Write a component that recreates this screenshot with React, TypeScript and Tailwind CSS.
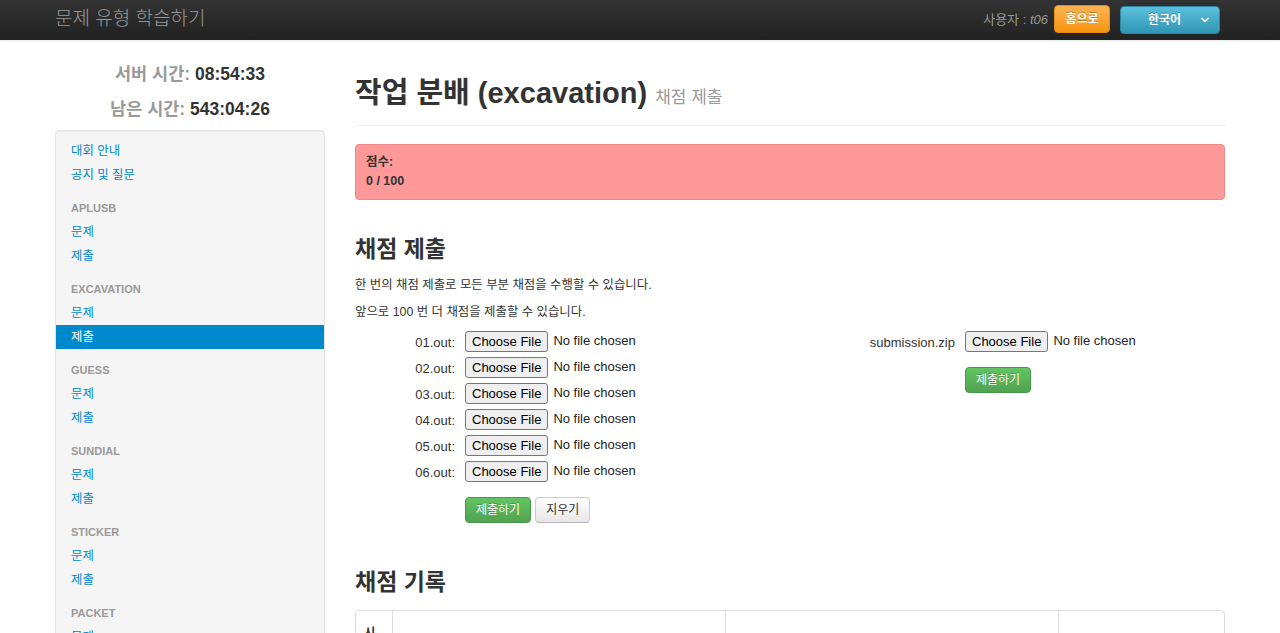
import React from "react";
import { ChevronDown } from "lucide-react";

type NavItem = { kind: "link" | "header"; label: string; active?: boolean };

const navItems: NavItem[] = [
  { kind: "link", label: "대회 안내" },
  { kind: "link", label: "공지 및 질문" },
  { kind: "header", label: "aplusb" },
  { kind: "link", label: "문제" },
  { kind: "link", label: "제출" },
  { kind: "header", label: "excavation" },
  { kind: "link", label: "문제" },
  { kind: "link", label: "제출", active: true },
  { kind: "header", label: "guess" },
  { kind: "link", label: "문제" },
  { kind: "link", label: "제출" },
  { kind: "header", label: "sundial" },
  { kind: "link", label: "문제" },
  { kind: "link", label: "제출" },
  { kind: "header", label: "sticker" },
  { kind: "link", label: "문제" },
  { kind: "link", label: "제출" },
  { kind: "header", label: "packet" },
  { kind: "link", label: "문제" },
  { kind: "link", label: "제출" },
];

const outputs = ["01.out", "02.out", "03.out", "04.out", "05.out", "06.out"];

function FilePicker() {
  return (
    <div className="flex items-center">
      <span className="h-[21px] px-[6px] border border-[#767676] bg-[#efefef] rounded-[3px] text-[13px] leading-[19px] text-black">
        Choose File
      </span>
      <span className="ml-[5px] text-[13px] text-[#222]">No file chosen</span>
    </div>
  );
}

function GreenButton() {
  return (
    <button className="h-[26px] px-[10px] rounded-[4px] border border-[#459845] bg-gradient-to-b from-[#62c462] to-[#51a351] text-white text-[12px] leading-[24px] [text-shadow:0_-1px_0_rgba(0,0,0,0.25)]">
      제출하기
    </button>
  );
}

export default function App() {
  return (
    <div className="min-h-[633px] bg-white text-[#333] font-['Liberation_Sans','Noto_Sans_CJK_KR',sans-serif] text-[13px] leading-[20px]">
      {/* top navbar */}
      <div className="h-[40px] bg-gradient-to-b from-[#333] to-[#222] border-b border-[#252525] shadow-[0_1px_2px_rgba(0,0,0,0.1)]">
        <div className="w-[1170px] mx-auto h-full flex items-center justify-between">
          <span className="text-[19px] font-extralight text-[#999] leading-[20px] -mt-[2px]">문제 유형 학습하기</span>
          <div className="flex items-center h-full mr-[5px]">
            <span className="text-[13px] text-[#999]">
              사용자 : <i>t06</i>
            </span>
            <button className="ml-[6px] h-[28px] w-[56px] -mt-[2px] rounded-[4px] border border-[#e38d13] bg-gradient-to-b from-[#fbb450] to-[#f89406] text-white text-[12px] font-bold [text-shadow:0_-1px_0_rgba(0,0,0,0.25)]">
              홈으로
            </button>
            <button className="ml-[10px] h-[28px] w-[100px] rounded-[4px] border border-[#2a85a0] bg-gradient-to-b from-[#5bc0de] to-[#2f96b4] text-white text-[12px] font-bold flex items-center justify-between pl-[27px] pr-[8px] [text-shadow:0_-1px_0_rgba(0,0,0,0.25)]">
              <span>한국어</span>
              <ChevronDown size={12} strokeWidth={3.5} />
            </button>
          </div>
        </div>
      </div>

      <div className="w-[1170px] mx-auto flex gap-[30px]">
        {/* sidebar */}
        <div className="w-[270px] shrink-0 pt-[17px]">
          <p className="text-center text-[17.5px] font-bold leading-[35px]">
            <span className="text-[#999]">서버 시간:</span> <span className="text-[#333]">08:54:33</span>
          </p>
          <p className="text-center text-[17.5px] font-bold leading-[35px]">
            <span className="text-[#999]">남은 시간:</span> <span className="text-[#333]">543:04:26</span>
          </p>
          <div className="mt-[3px] bg-[#f5f5f5] border border-[#e3e3e3] rounded-[4px] shadow-[inset_0_1px_1px_rgba(0,0,0,0.05)] pt-[8px] pb-[9px] h-[520px]">
            <ul className="flex flex-col">
              {navItems.map((item, i) => {
                if (item.kind === "header") {
                  return (
                    <li
                      key={i}
                      className={`px-[15px] py-[2px] text-[11px] leading-[20px] font-bold uppercase text-[#999] ${i > 0 ? "mt-[9px]" : ""}`}
                    >
                      {item.label}
                    </li>
                  );
                }
                return (
                  <li key={i}>
                    <a
                      className={`block px-[15px] py-[2px] text-[12.4px] leading-[20px] ${
                        item.active ? "bg-[#0088cc] text-white" : "text-[#0088cc]"
                      }`}
                    >
                      {item.label}
                    </a>
                  </li>
                );
              })}
            </ul>
          </div>
        </div>

        {/* main */}
        <div className="flex-1 pt-[33px]">
          <div className="pb-[7px] border-b border-[#eee]">
            <h1 className="text-[29px] font-bold leading-[40px] text-[#333]">
              작업 분배 (excavation) <small className="text-[17px] font-normal text-[#999]">채점 제출</small>
            </h1>
          </div>

          <div className="mt-[18px] px-[10px] py-[8px] bg-[#ff9999] border border-[#f08a8a] rounded-[4px] text-[12.5px] font-bold leading-[19px] text-[#333]">
            <div>점수:</div>
            <div>0 / 100</div>
          </div>

          <h2 className="mt-[29px] text-[23px] font-bold leading-[40px]">채점 제출</h2>
          <p className="mt-[7px] text-[12.4px] leading-[18px]">한 번의 채점 제출로 모든 부분 채점을 수행할 수 있습니다.</p>
          <p className="mt-[9px] text-[12.4px] leading-[18px]">앞으로 100 번 더 채점을 제출할 수 있습니다.</p>

          <div className="mt-[7px] flex">
            <div className="w-[500px]">
              {outputs.map((name) => (
                <div key={name} className="h-[26px] flex items-center">
                  <label className="w-[100px] text-right text-[13px] pt-[3px] text-[#333]">{name}:</label>
                  <div className="ml-[10px]">
                    <FilePicker />
                  </div>
                </div>
              ))}
              <div className="mt-[13px] ml-[110px] flex gap-[4px]">
                <GreenButton />
                <button className="h-[26px] px-[10px] rounded-[4px] border border-[#ccc] border-b-[#b3b3b3] bg-gradient-to-b from-white to-[#e6e6e6] text-[#333] text-[12px] leading-[24px]">
                  지우기
                </button>
              </div>
            </div>
            <div className="flex-1">
              <div className="h-[26px] flex items-center">
                <label className="w-[100px] text-right text-[13px] pt-[3px] text-[#333]">submission.zip</label>
                <div className="ml-[10px]">
                  <FilePicker />
                </div>
              </div>
              <div className="mt-[13px] ml-[110px]">
                <GreenButton />
              </div>
            </div>
          </div>

          <h2 className="mt-[39px] text-[23px] font-bold leading-[40px]">채점 기록</h2>
          <table className="mt-[8px] w-full border-separate border-spacing-0 border border-[#ddd] rounded-[4px]">
            <thead>
              <tr>
                <th className="w-[36px] px-[8px] pt-[5px] pb-[8px] align-bottom text-left font-bold text-[12.4px] leading-[20px]">시간</th>
                <th className="w-[333px] p-[8px] align-bottom text-left font-bold border-l border-[#ddd] h-[60px]">점수</th>
                <th className="w-[333px] p-[8px] align-bottom text-left font-bold border-l border-[#ddd]">파일</th>
                <th className="p-[8px] align-bottom text-left font-bold border-l border-[#ddd]">토큰</th>
              </tr>
            </thead>
          </table>
        </div>
      </div>
    </div>
  );
}
